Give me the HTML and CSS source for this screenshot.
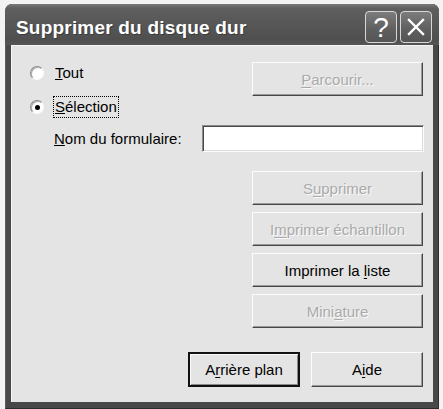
FILE: index.html
```html
<!DOCTYPE html>
<html lang="fr">
<head>
<meta charset="utf-8">
<title>Supprimer du disque dur</title>
<link rel="stylesheet" href="styles.css">
</head>
<body>
<div class="window">
  <div class="titlebar">
    <span class="title">Supprimer du disque dur</span>
    <div class="tbtns">
      <span class="tbtn">
        <svg width="32" height="32" viewBox="0 0 32 32"><text x="16" y="26" text-anchor="middle" class="qmark">?</text></svg>
      </span>
      <span class="tbtn">
        <svg width="32" height="32" viewBox="0 0 32 32"><path d="M9 9 L23 23 M23 9 L9 23" stroke="#fff" stroke-width="2.4" stroke-linecap="square" fill="none"/></svg>
      </span>
    </div>
  </div>
  <div class="client">
    <div class="row1">
      <div class="radios">
        <label class="radio"><span class="rcircle"></span><span class="rtext"><u>T</u>out</span></label>
        <label class="radio"><span class="rcircle checked"></span><span class="rtext focus"><u>S</u>élection</span></label>
      </div>
      <button class="btn wide disabled" type="button"><u>P</u>arcourir...</button>
    </div>
    <div class="namerow">
      <span class="nlabel"><u>N</u>om du formulaire:</span>
      <span class="field"></span>
    </div>
    <div class="actions">
      <button class="btn wide disabled" type="button">S<u>u</u>pprimer</button>
      <button class="btn wide disabled" type="button">I<u>m</u>primer échantillon</button>
      <button class="btn wide" type="button">Imprimer la <u>l</u>iste</button>
      <button class="btn wide disabled" type="button">Mini<u>a</u>ture</button>
    </div>
    <div class="footer">
      <button class="btn small default" type="button">A<u>r</u>rière plan</button>
      <button class="btn small" type="button">A<u>i</u>de</button>
    </div>
  </div>
</div>
</body>
</html>
```
FILE: styles.css
```css
html, body {
  margin: 0;
  padding: 0;
  background: #f3f3f3;
}
body {
  padding: 4px 4px 0 5px;
  font-family: "Liberation Sans", Arial, sans-serif;
  font-size: 15px;
  color: #000;
}
.window {
  width: 434px;
  height: 405px;
  box-sizing: border-box;
  background: #484848;
  border-radius: 7px 7px 0 0;
  display: flex;
  flex-direction: column;
  padding: 0 5px 6px 5px;
  border-left: 1px solid #5e5e5e;
  border-right: 1px solid #2e2e2e;
  border-bottom: 1px solid #2a2a2a;
}
.titlebar {
  height: 41px;
  margin: 0 -6px;
  padding: 0 6px 0 11px;
  border-radius: 7px 7px 0 0;
  background: linear-gradient(#7a7a7a 0px, #5f5f5f 4px, #575757 20px, #4f4f4f 36px, #555 41px);
  display: flex;
  align-items: center;
  justify-content: space-between;
}
.title {
  color: #fff;
  font-weight: bold;
  font-size: 19px;
  letter-spacing: 0.2px;
  text-shadow: 1px 1px 0 #3a3a3a;
  padding-top: 7px;
}
.tbtns {
  display: flex;
  gap: 3px;
  padding-top: 5px;
  margin-right: 1px;
}
.tbtn {
  width: 30px;
  height: 30px;
  border: 1px solid #d8d8d8;
  border-radius: 4px;
  background: linear-gradient(#7c7c7c, #5e5e5e 60%, #555);
  display: flex;
  align-items: center;
  justify-content: center;
  overflow: hidden;
}
.tbtn svg {
  display: block;
  flex: none;
}
.qmark {
  fill: #fff;
  font-family: "Liberation Sans", Arial, sans-serif;
  font-weight: normal;
  font-size: 28px;
}
.client {
  flex: 1;
  background: #e4e4e4;
  border-top: 1px solid #f6f6f6;
  border-left: 1px solid #f6f6f6;
  display: flex;
  flex-direction: column;
  padding: 16px 10px 0 18px;
}
.row1 {
  display: flex;
  justify-content: space-between;
  align-items: flex-start;
}
.radios {
  display: flex;
  flex-direction: column;
  gap: 12px;
}
.radio {
  height: 22px;
  display: flex;
  align-items: center;
  gap: 10px;
}
.rcircle {
  width: 12px;
  height: 12px;
  border-radius: 50%;
  border: 1px solid;
  border-color: #8a8a8a #fcfcfc #fcfcfc #8a8a8a;
  background: #fff;
  box-shadow: inset 1px 1px 0 #b0b0b0;
  position: relative;
  flex: none;
}
.rcircle.checked::after {
  content: "";
  position: absolute;
  left: 3.5px;
  top: 3.5px;
  width: 5px;
  height: 5px;
  border-radius: 50%;
  background: #000;
}
.rtext {
  line-height: 20px;
  padding: 0 1px;
}
.rtext.focus {
  outline: 1px dotted #000;
  outline-offset: 0;
}
.btn {
  font-family: "Liberation Sans", Arial, sans-serif;
  font-size: 15px;
  color: #000;
  background: #e4e4e4;
  border: 1px solid;
  border-color: #fcfcfc #484848 #484848 #fcfcfc;
  box-shadow: inset -1px -1px 0 #9a9a9a;
  padding: 0;
  margin: 0;
  height: 34px;
  box-sizing: border-box;
}
.btn u { text-decoration-thickness: 1px; text-underline-offset: 2px; }
.btn.wide { width: 171px; }
.btn.small { width: 112px; height: 35px; }
.btn.disabled {
  color: #aaaaaa;
  text-shadow: 1px 1px 0 #fafafa;
}
.btn.default {
  outline: 1px solid #111;
  outline-offset: -1px;
  border-width: 2px 2px 2px 2px;
  border-color: #111;
  box-shadow: inset 1px 1px 0 #fcfcfc, inset -1px -1px 0 #8a8a8a;
}
.namerow {
  margin-top: 7px;
  margin-left: 24px;
  display: flex;
  align-items: center;
  justify-content: space-between;
}
.field {
  width: 222px;
  height: 27px;
  box-sizing: border-box;
  background: #fff;
  border: 1px solid;
  border-color: #8a8a8a #fcfcfc #fcfcfc #8a8a8a;
  box-shadow: inset 1px 1px 0 #4a4a4a, inset -1px -1px 0 #dcdcdc;
  margin-right: -1px;
}
.actions {
  margin-top: 19px;
  display: flex;
  flex-direction: column;
  align-items: flex-end;
  gap: 7px;
}
.footer {
  margin-top: 24px;
  display: flex;
  justify-content: flex-end;
  gap: 11px;
}
```
